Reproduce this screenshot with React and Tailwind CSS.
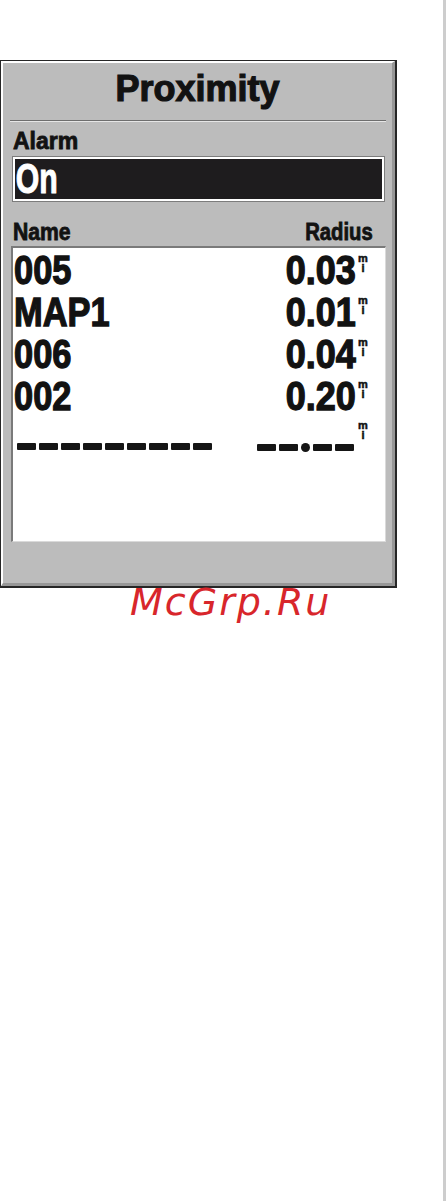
import React from 'react';

const rows = [
  { name: '005', radius: '0.03' },
  { name: 'MAP1', radius: '0.01' },
  { name: '006', radius: '0.04' },
  { name: '002', radius: '0.20' },
];

const Unit = () => (
  <div className="flex flex-col items-center w-[10px] font-bold text-[11px] text-[#111] [-webkit-text-stroke:0.5px_#111]">
    <span className="leading-[10px]">m</span>
    <span className="leading-[11px]">i</span>
  </div>
);

const Dash = () => <div className="w-[19px] h-[7px] bg-[#151515] rounded-[1px]" />;

const App = () => {
  return (
    <div
      className="w-[446px] h-[1201px] bg-white flex"
      style={{ fontFamily: '"Liberation Sans", Arial, sans-serif' }}
    >
      <div className="w-[443px] flex flex-col">
        {/* device screen */}
        <div className="mt-[60px] w-[397px] h-[528px] border-t border-l border-r-2 border-b-2 border-[#262626] flex">
          <div className="flex-1 flex flex-col bg-[#bcbcbc] border-t-2 border-l-2 border-white border-r-[3px] border-b-[3px] border-r-[#979797] border-b-[#979797]">
            <div className="mt-[8px] h-[36px] text-center text-[36px] leading-none font-bold text-[#121212] [-webkit-text-stroke:1.2px_#121212]">
              Proximity
            </div>

            <div className="mt-[13px] ml-[7px] mr-[6px] h-[2px] border-t border-[#6e6e6e] border-b border-b-[#e6e6e6]" />

            <div className="mt-[8px] pl-[10px] h-[23px] text-[23px] leading-none font-bold text-[#121212] [-webkit-text-stroke:0.8px_#121212]">
              Alarm
            </div>

            <div className="mt-[3px] ml-[9px] mr-[7px] border border-[#7c7c7c]">
              <div className="h-[44px] border-2 border-white bg-[#1e1c1e] flex items-center">
                <span className="inline-block pl-[1px] origin-left scale-x-[0.72] text-[42px] leading-[38px] font-bold text-white [-webkit-text-stroke:1px_#ffffff]">
                  On
                </span>
              </div>
            </div>

            <div className="mt-[19px] pl-[10px] pr-[19px] h-[23px] flex justify-between text-[23px] leading-none font-bold text-[#121212] [-webkit-text-stroke:0.8px_#121212]">
              <span className="inline-block origin-left scale-x-[0.92]">Name</span>
              <span className="inline-block origin-right scale-x-[0.88]">Radius</span>
            </div>

            <div className="mt-[2px] ml-[8px] mr-[6px] h-[296px] bg-white border-t-2 border-l-2 border-[#7a7a7a] border-r border-b border-r-[#dadada] border-b-[#dadada] pt-[1px] pl-[1px] pr-[17px]">
              {rows.map((r) => (
                <div key={r.name} className="h-[42px] flex justify-between items-start">
                  <span className="inline-block origin-left scale-x-[0.86] text-[40px] leading-[42px] font-bold text-[#121212] [-webkit-text-stroke:1.3px_#121212]">
                    {r.name}
                  </span>
                  <div className="flex items-start">
                    <span className="inline-block origin-right scale-x-[0.9] text-[40px] leading-[42px] font-bold text-[#121212] [-webkit-text-stroke:1.3px_#121212]">
                      {r.radius}
                    </span>
                    <div className="ml-[2px] mt-[4px]">
                      <Unit />
                    </div>
                  </div>
                </div>
              ))}

              <div className="h-[42px] flex justify-between items-start">
                <div className="mt-[26px] ml-[3px] flex gap-[3px]">
                  {Array.from({ length: 9 }).map((_, i) => (
                    <Dash key={i} />
                  ))}
                </div>
                <div className="flex items-start">
                  <div className="mt-[26px] flex items-center gap-[3px]">
                    <Dash />
                    <Dash />
                    <div className="w-[9px] h-[9px] rounded-full bg-[#151515]" />
                    <Dash />
                    <Dash />
                  </div>
                  <div className="ml-[4px] mt-[3px]">
                    <Unit />
                  </div>
                </div>
              </div>
            </div>
          </div>
        </div>

        <div
          className="-mt-[5px] ml-[130px] text-[38px] leading-none italic tracking-[2px] text-[#d8262b]"
          style={{ fontFamily: '"DejaVu Sans", Verdana, sans-serif' }}
        >
          McGrp.Ru
        </div>
      </div>
      <div className="w-[3px] bg-[#cdcdcd]" />
    </div>
  );
};

export default App;
